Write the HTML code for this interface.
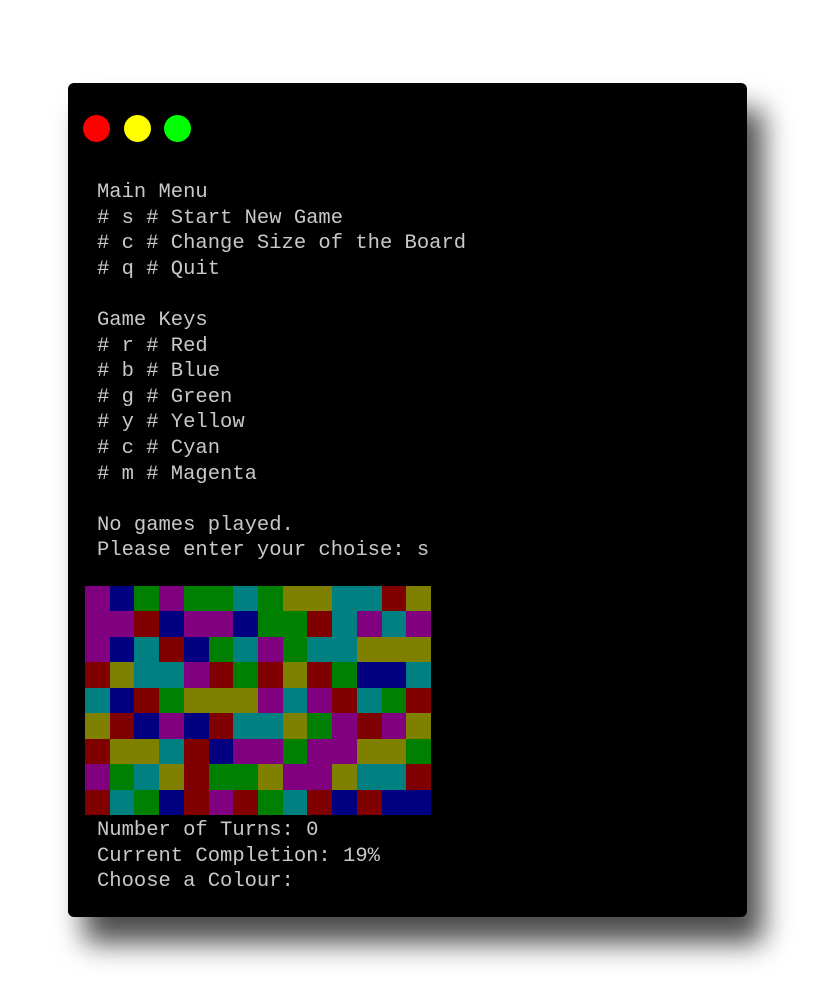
<!DOCTYPE html>
<html><head><style>
body{margin:0;width:815px;height:1001px;background:#fff;position:relative;overflow:hidden;}
.win{position:absolute;left:68px;top:83px;width:679px;height:834px;background:#000;border-radius:6px;box-shadow:16px 26px 28px rgba(0,0,0,0.7);}
.dot{position:absolute;top:115px;width:27px;height:27px;border-radius:50%;}
pre{position:absolute;left:97px;margin:0;font-family:"Liberation Mono",monospace;font-size:20.5px;line-height:25.6px;color:#c8c8c8;}
.grid{position:absolute;left:85px;top:586px;width:346px;height:229px;display:grid;grid-template-columns:repeat(14,1fr);grid-template-rows:repeat(9,1fr);}
.P{background:#800080}.B{background:#000080}.G{background:#008000}.C{background:#008080}.Y{background:#808000}.R{background:#800000}
</style></head><body>
<div class="win"></div>
<div class="dot" style="left:83px;background:#ff0000"></div>
<div class="dot" style="left:124px;background:#ffff00"></div>
<div class="dot" style="left:164px;background:#00ff00"></div>
<pre style="top:180px">Main Menu
# s # Start New Game
# c # Change Size of the Board
# q # Quit

Game Keys
# r # Red
# b # Blue
# g # Green
# y # Yellow
# c # Cyan
# m # Magenta

No games played.
Please enter your choise: s</pre>
<pre style="top:818px">Number of Turns: 0
Current Completion: 19%
Choose a Colour:</pre>
<div class="grid">
<div class="P"></div><div class="B"></div><div class="G"></div><div class="P"></div><div class="G"></div><div class="G"></div><div class="C"></div><div class="G"></div><div class="Y"></div><div class="Y"></div><div class="C"></div><div class="C"></div><div class="R"></div><div class="Y"></div>
<div class="P"></div><div class="P"></div><div class="R"></div><div class="B"></div><div class="P"></div><div class="P"></div><div class="B"></div><div class="G"></div><div class="G"></div><div class="R"></div><div class="C"></div><div class="P"></div><div class="C"></div><div class="P"></div>
<div class="P"></div><div class="B"></div><div class="C"></div><div class="R"></div><div class="B"></div><div class="G"></div><div class="C"></div><div class="P"></div><div class="G"></div><div class="C"></div><div class="C"></div><div class="Y"></div><div class="Y"></div><div class="Y"></div>
<div class="R"></div><div class="Y"></div><div class="C"></div><div class="C"></div><div class="P"></div><div class="R"></div><div class="G"></div><div class="R"></div><div class="Y"></div><div class="R"></div><div class="G"></div><div class="B"></div><div class="B"></div><div class="C"></div>
<div class="C"></div><div class="B"></div><div class="R"></div><div class="G"></div><div class="Y"></div><div class="Y"></div><div class="Y"></div><div class="P"></div><div class="C"></div><div class="P"></div><div class="R"></div><div class="C"></div><div class="G"></div><div class="R"></div>
<div class="Y"></div><div class="R"></div><div class="B"></div><div class="P"></div><div class="B"></div><div class="R"></div><div class="C"></div><div class="C"></div><div class="Y"></div><div class="G"></div><div class="P"></div><div class="R"></div><div class="P"></div><div class="Y"></div>
<div class="R"></div><div class="Y"></div><div class="Y"></div><div class="C"></div><div class="R"></div><div class="B"></div><div class="P"></div><div class="P"></div><div class="G"></div><div class="P"></div><div class="P"></div><div class="Y"></div><div class="Y"></div><div class="G"></div>
<div class="P"></div><div class="G"></div><div class="C"></div><div class="Y"></div><div class="R"></div><div class="G"></div><div class="G"></div><div class="Y"></div><div class="P"></div><div class="P"></div><div class="Y"></div><div class="C"></div><div class="C"></div><div class="R"></div>
<div class="R"></div><div class="C"></div><div class="G"></div><div class="B"></div><div class="R"></div><div class="P"></div><div class="R"></div><div class="G"></div><div class="C"></div><div class="R"></div><div class="B"></div><div class="R"></div><div class="B"></div><div class="B"></div>
</div>
</body></html>
